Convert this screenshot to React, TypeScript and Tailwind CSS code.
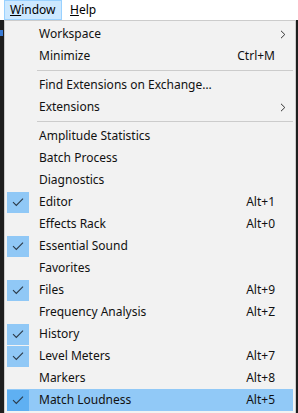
import React from "react";

// Menú "Window" desplegado (estilo Windows 10)
interface MenuItem {
  label?: string;
  shortcut?: string;
  submenu?: boolean;
  checked?: boolean;
  active?: boolean;
  separator?: boolean;
}

const items: MenuItem[] = [
  { label: "Workspace", submenu: true },
  { label: "Minimize", shortcut: "Ctrl+M" },
  { separator: true },
  { label: "Find Extensions on Exchange…" },
  { label: "Extensions", submenu: true },
  { separator: true },
  { label: "Amplitude Statistics" },
  { label: "Batch Process" },
  { label: "Diagnostics" },
  { label: "Editor", shortcut: "Alt+1", checked: true },
  { label: "Effects Rack", shortcut: "Alt+0" },
  { label: "Essential Sound", checked: true },
  { label: "Favorites" },
  { label: "Files", shortcut: "Alt+9", checked: true },
  { label: "Frequency Analysis", shortcut: "Alt+Z" },
  { label: "History", checked: true },
  { label: "Level Meters", shortcut: "Alt+7", checked: true },
  { label: "Markers", shortcut: "Alt+8" },
  { label: "Match Loudness", shortcut: "Alt+5", checked: true, active: true },
];

function Check() {
  return (
    <svg width="12" height="10" viewBox="0 0 12 10" fill="none">
      <path d="M1 5.2 L4.3 8.4 L11 1.6" stroke="#2b3a48" strokeWidth="1.1" />
    </svg>
  );
}

function Chevron() {
  return (
    <svg width="6" height="9" viewBox="0 0 6 9" fill="none">
      <path d="M1 0.8 L4.8 4.5 L1 8.2" stroke="#333" strokeWidth="1" />
    </svg>
  );
}

function Row({ item }: { item: MenuItem }) {
  if (item.separator) {
    return (
      <div className="h-[7px] flex items-center pl-[30px]">
        <div className="h-px w-full bg-[#cccccc]" />
      </div>
    );
  }
  return (
    <div className={`h-[22px] flex items-center ${item.active ? "bg-[#91c9f7]" : ""}`}>
      <div className="w-[22px] h-[22px] flex items-center justify-center">
        {item.checked ? (
          <div className={`w-[22px] h-[21px] flex items-center justify-center ${item.active ? "bg-[#5fb0f2]" : "bg-[#90c8f6]"}`}>
            <Check />
          </div>
        ) : null}
      </div>
      <span className="ml-[10px] flex-1 text-[12px] text-[#111]">{item.label}</span>
      {item.shortcut ? <span className="text-[12px] text-[#111] mr-[18px]">{item.shortcut}</span> : null}
      {item.submenu ? (
        <span className="mr-[7px] flex items-center">
          <Chevron />
        </span>
      ) : null}
    </div>
  );
}

export default function App() {
  return (
    <div
      className="w-[298px] h-[413px] bg-[#1e1e1e] flex flex-col overflow-hidden"
      style={{ fontFamily: '"Noto Sans", "Open Sans", Arial, sans-serif' }}
    >
      {/* Barra de menú */}
      <div className="h-[20px] bg-white flex items-stretch pl-[4px] text-[12px] text-black">
        <div className="w-[58px] bg-[#cce8ff] border border-[#99d1ff] flex items-center pl-[5px]">
          <span><span className="underline">W</span>indow</span>
        </div>
        <div className="flex items-center pl-[8px]">
          <span><span className="underline">H</span>elp</span>
        </div>
      </div>

      {/* Menú desplegable */}
      <div className="flex flex-1">
        <div className="w-[4px] flex flex-col">
          <div className="h-[10px]" />
          <div className="h-[6px] bg-[#3a7bd5] w-[3px]" />
        </div>
        <div className="w-[292px] bg-[#f2f2f2] border border-[#cccccc] border-b-0 pt-[2px] px-[2px]">
          {items.map((item, i) => (
            <Row key={i} item={item} />
          ))}
        </div>
      </div>
    </div>
  );
}
